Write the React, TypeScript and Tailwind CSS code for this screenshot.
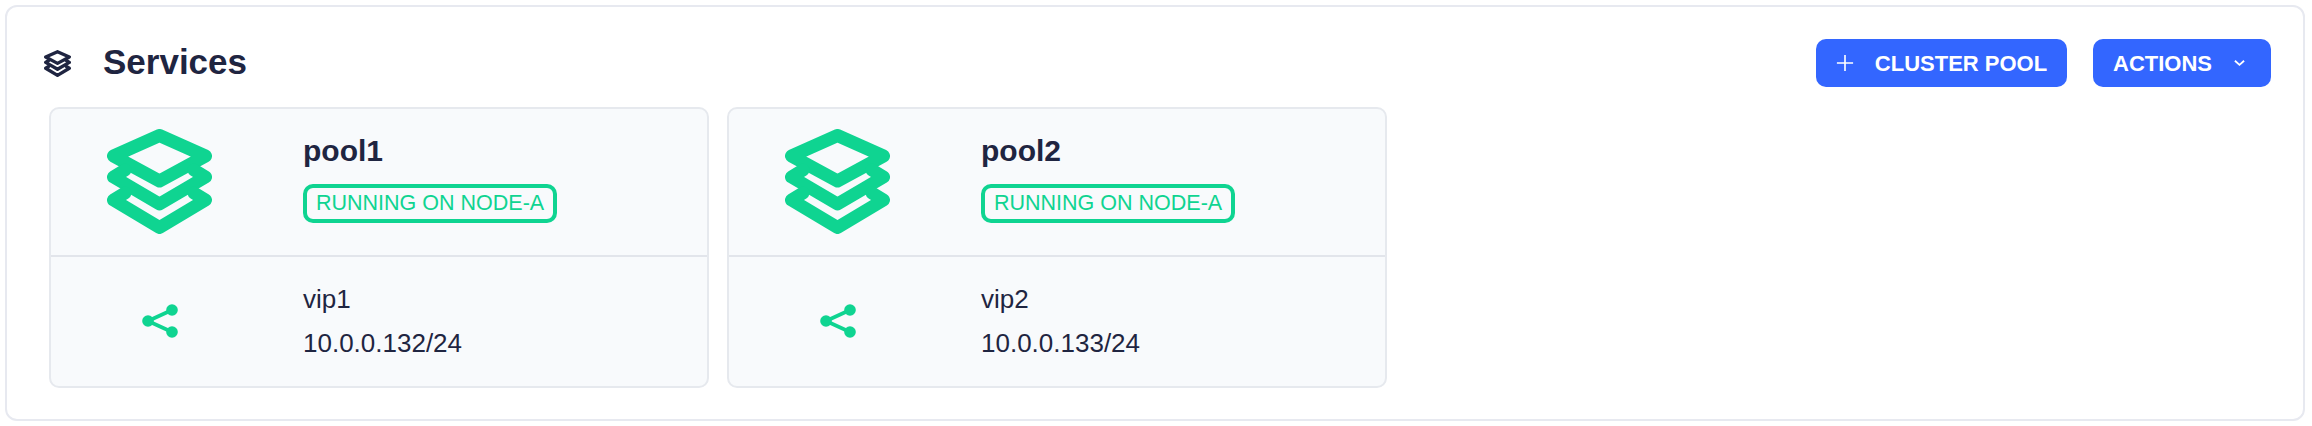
const font = "font-['Liberation_Sans',Arial,sans-serif]";

function Layers({ className }: { className: string }) {
  return (
    <svg viewBox="0 0 105 105" fill="none" stroke="currentColor" strokeWidth="13" strokeLinejoin="round" strokeLinecap="round" className={className}>
      <path d="M52.5 6.5 L98.5 27 L52.5 52 L6.5 27 Z" />
      <path d="M18 41 L6.5 48 L52.5 75 L98.5 48 L87 41" />
      <path d="M18 64 L6.5 71 L52.5 98.5 L98.5 71 L87 64" />
    </svg>
  );
}

function Share() {
  return (
    <svg viewBox="0 0 36 36" fill="none" className="mb-[2px] h-[36px] w-[36px] text-[#0fd491]">
      <path d="M30 7 L6 18 L30 29" stroke="currentColor" strokeWidth="3.8" />
      <circle cx="30" cy="7" r="5.8" fill="currentColor" />
      <circle cx="6" cy="18" r="5.8" fill="currentColor" />
      <circle cx="30" cy="29" r="5.8" fill="currentColor" />
    </svg>
  );
}

function PoolCard({ name, vip, ip }: { name: string; vip: string; ip: string }) {
  return (
    <div className="h-[281px] w-[660px] rounded-[10px] border-2 border-[#e6e9ee] bg-[#f8fafc]">
      <div className="flex h-[148px] border-b-2 border-[#e2e5eb]">
        <div className="mr-[35px] flex w-[217px] shrink-0 items-center justify-center pb-[2px]">
          <Layers className="h-[105px] w-[105px] text-[#0fd491]" />
        </div>
        <div className="pt-[24px]">
          <div className="text-[30px] leading-[36px] font-bold text-[#1f2541]">{name}</div>
          <div className="mt-[15px] rounded-[10px] border-[4px] border-[#0fd491] px-[9px] text-[21.5px] leading-[31px] text-[#0fd491]">
            RUNNING ON NODE-A
          </div>
        </div>
      </div>
      <div className="flex h-[129px]">
        <div className="mr-[35px] flex w-[217px] shrink-0 items-center justify-center">
          <Share />
        </div>
        <div className="pt-[20px] text-[26px] leading-[44px] text-[#1f2541]">
          <div>{vip}</div>
          <div>{ip}</div>
        </div>
      </div>
    </div>
  );
}

export default function App() {
  return (
    <div className={`${font} h-[426px] w-[2312px] bg-white p-[5px] pr-[7px]`}>
      <div className="h-[416px] rounded-[12px] border-2 border-[#e7e9f0] pt-[32px] pr-[32px] pl-[37px]">
        <div className="flex h-[48px] items-center justify-between">
          <div className="flex items-center">
            <Layers className="h-[27px] w-[27px] text-[#1f2541]" />
            <h1 className="mb-[2px] ml-[32px] text-[35px] leading-[48px] font-bold text-[#1f2541]">Services</h1>
          </div>
          <div className="flex gap-[26px] text-[22px] font-bold text-white">
            <button className="flex h-[48px] w-[251px] items-center justify-center gap-[21px] rounded-[10px] bg-[#3366ff]">
              <svg viewBox="0 0 20 20" className="h-[20px] w-[18px]" stroke="currentColor" strokeWidth="1.8" fill="none">
                <path d="M10 1 V19 M1 10 H19" />
              </svg>
              CLUSTER POOL
            </button>
            <button className="flex h-[48px] w-[178px] items-center justify-center gap-[22px] rounded-[10px] bg-[#3366ff] pr-[6px]">
              ACTIONS
              <svg viewBox="0 0 12 8" className="h-[8px] w-[11px]" stroke="currentColor" strokeWidth="2" fill="none">
                <path d="M1 1.5 L6 6 L11 1.5" />
              </svg>
            </button>
          </div>
        </div>
        <div className="mt-[20px] flex gap-[18px] pl-[5px]">
          <PoolCard name="pool1" vip="vip1" ip="10.0.0.132/24" />
          <PoolCard name="pool2" vip="vip2" ip="10.0.0.133/24" />
        </div>
      </div>
    </div>
  );
}
